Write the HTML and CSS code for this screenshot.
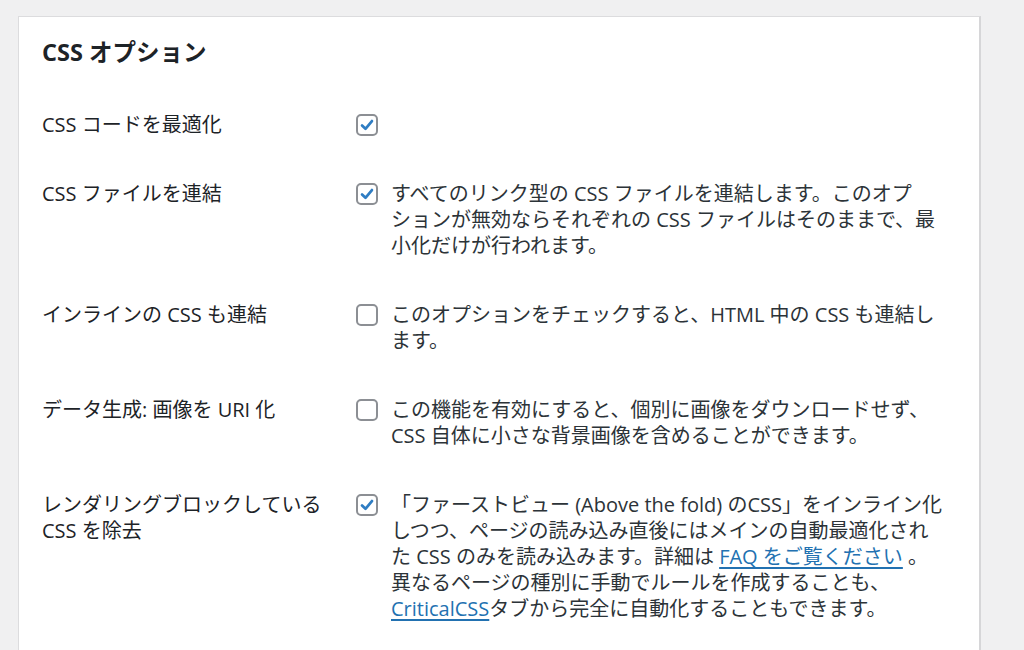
FILE: index.html
```html
<!DOCTYPE html>
<html lang="ja">
<head>
<meta charset="utf-8">
<title>CSS オプション</title>
<link rel="stylesheet" href="styles.css">
</head>
<body>
<div class="page">
  <section class="card">
    <h2 class="card-title">CSS オプション</h2>
    <div class="rows">
      <div class="row">
        <div class="label">CSS コードを最適化</div>
        <div class="field">
          <span class="checkbox is-checked"><svg viewBox="0 0 20 20" width="20" height="20"><path d="M4.5 10.5 L8.3 14.2 L15.5 5.6" /></svg></span>
        </div>
      </div>
      <div class="row">
        <div class="label">CSS ファイルを連結</div>
        <div class="field">
          <span class="checkbox is-checked"><svg viewBox="0 0 20 20" width="20" height="20"><path d="M4.5 10.5 L8.3 14.2 L15.5 5.6" /></svg></span>
          <p class="desc">すべてのリンク型の CSS ファイルを連結します。このオプ<br>ションが無効ならそれぞれの CSS ファイルはそのままで、最<br>小化だけが行われます。</p>
        </div>
      </div>
      <div class="row">
        <div class="label">インラインの CSS も連結</div>
        <div class="field">
          <span class="checkbox"></span>
          <p class="desc">このオプションをチェックすると、HTML 中の CSS も連結し<br>ます。</p>
        </div>
      </div>
      <div class="row">
        <div class="label">データ生成: 画像を URI 化</div>
        <div class="field">
          <span class="checkbox"></span>
          <p class="desc">この機能を有効にすると、個別に画像をダウンロードせず、<br>CSS 自体に小さな背景画像を含めることができます。</p>
        </div>
      </div>
      <div class="row">
        <div class="label">レンダリングブロックしている<br>CSS を除去</div>
        <div class="field">
          <span class="checkbox is-checked"><svg viewBox="0 0 20 20" width="20" height="20"><path d="M4.5 10.5 L8.3 14.2 L15.5 5.6" /></svg></span>
          <p class="desc">「ファーストビュー (Above the fold) のCSS」をインライン化<br>しつつ、ページの読み込み直後にはメインの自動最適化され<br>た CSS のみを読み込みます。詳細は <a href="#">FAQ をご覧ください</a> 。<br>異なるページの種別に手動でルールを作成することも、<br><a href="#">CriticalCSS</a>タブから完全に自動化することもできます。</p>
        </div>
      </div>
    </div>
  </section>
</div>
</body>
</html>
```

FILE: styles.css
```css
html, body {
  margin: 0;
  padding: 0;
}
body {
  background: #f0f0f1;
  font-family: "Open Sans", "Noto Sans CJK JP", sans-serif;
  color: #3c434a;
  font-size: 20px;
  line-height: 26px;
  height: 650px;
  overflow: hidden;
}
.page {
  padding: 16px 43px 0 18px;
}
.card {
  background: #fff;
  border: 1px solid #dcdcde;
  border-right: 2px solid #d6d6d8;
  border-bottom: 0;
  padding: 20px 22px 0 23px;
  height: 613px;
}
.card-title {
  margin: 0 0 23px;
  font-size: 23.5px;
  line-height: 30px;
  font-weight: 700;
  color: #1d2327;
}
.rows {
  display: flex;
  flex-direction: column;
}
.row {
  display: flex;
  padding: 22px 0 21px;
}
.row:last-child {
  padding-bottom: 0;
}
.label {
  width: 314px;
  flex: none;
  color: #1d2327;
}
.field {
  display: flex;
  align-items: flex-start;
  gap: 13px;
}
.checkbox {
  flex: none;
  box-sizing: border-box;
  width: 22px;
  height: 22px;
  margin-top: 2px;
  border: 2px solid #8c8f94;
  border-radius: 5px;
  background: #fff;
  display: flex;
  align-items: center;
  justify-content: center;
}
.checkbox svg {
  width: 18px;
  height: 18px;
  fill: none;
  stroke: #2f7dc3;
  stroke-width: 3;
  stroke-linecap: round;
  stroke-linejoin: round;
}
.desc {
  margin: 0;
  white-space: nowrap;
  color: #2c3338;
}
.desc a {
  color: #2271b1;
  text-decoration: underline;
  text-underline-offset: 3px;
}
```
